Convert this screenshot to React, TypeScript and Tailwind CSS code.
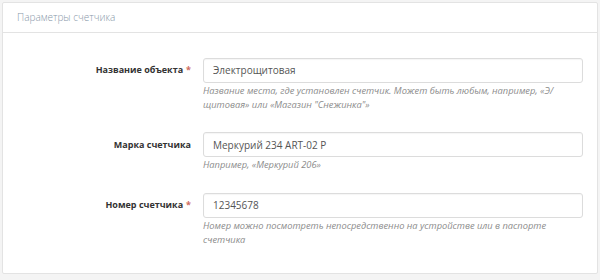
import React from 'react';

interface FieldProps {
  label: string;
  required?: boolean;
  value: string;
  help: string;
}

const Field: React.FC<FieldProps> = ({ label, required, value, help }) => (
  <div className="flex items-start">
    <label className="w-[188px] shrink-0 pt-[7px] text-right text-[9px] font-bold text-[#333]">
      {label}
      {required && <span className="ml-[3px] text-[#cf6a5f]">*</span>}
    </label>
    <div className="ml-[12px] flex-1">
      <input
        readOnly
        value={value}
        className="h-[25px] w-full rounded-[3px] border border-[#dcdcdc] bg-white px-[9px] text-[10px] text-[#555] shadow-[inset_0_1px_1px_rgba(0,0,0,0.04)] outline-none"
      />
      <p className="mt-[1px] text-[9.3px] italic leading-[14px] text-[#8c8c8c]">{help}</p>
    </div>
  </div>
);

const App: React.FC = () => {
  return (
    <div className="h-[280px] w-[600px] bg-[#f4f4f4] p-[2px] font-['Open_Sans',sans-serif]">
      <div className="h-[272px] rounded-[2px] border border-[#e3e3e3] bg-white">
        <div className="flex h-[30px] items-center border-b border-[#e3e3e3] px-[14px]">
          <h2 className="text-[10px] font-light text-[#8797a8]">Параметры счетчика</h2>
        </div>
        <div className="flex flex-col gap-[19px] pr-[14px] pt-[23px]">
          <Field
            label="Название объекта"
            required
            value="Электрощитовая"
            help={'Название места, где установлен счетчик. Может быть любым, например, «Э/щитовая» или «Магазин "Снежинка"»'}
          />
          <Field
            label="Марка счетчика"
            value="Меркурий 234 ART-02 P"
            help="Например, «Меркурий 206»"
          />
          <Field
            label="Номер счетчика"
            required
            value="12345678"
            help="Номер можно посмотреть непосредственно на устройстве или в паспорте счетчика"
          />
        </div>
      </div>
    </div>
  );
};

export default App;
